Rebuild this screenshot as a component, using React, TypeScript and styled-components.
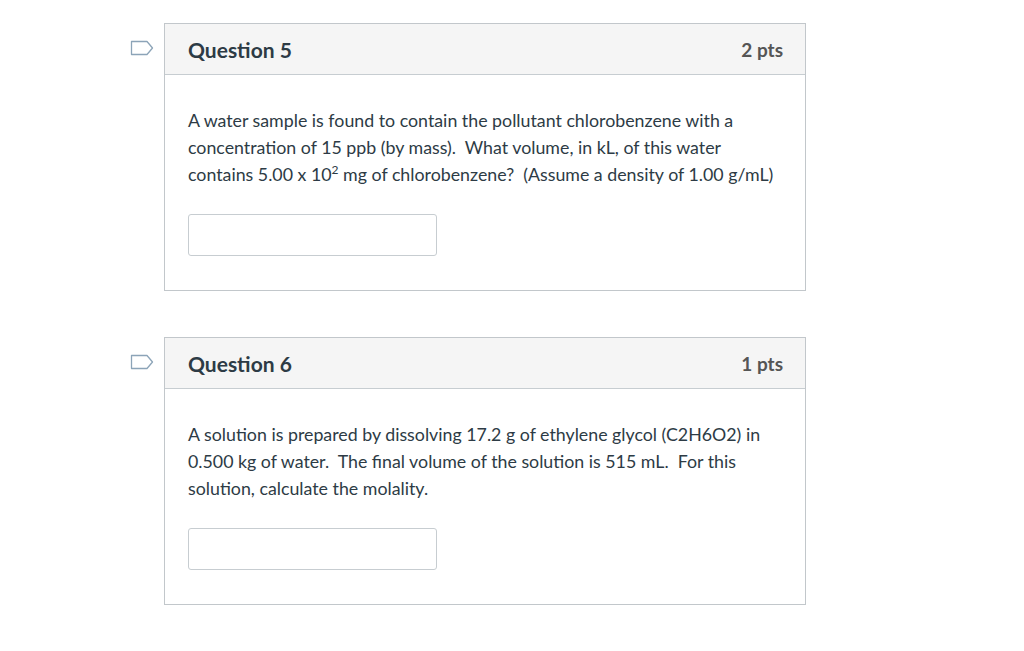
import React from "react";
import styled, { createGlobalStyle } from "styled-components";

const GlobalStyle = createGlobalStyle`
  html, body {
    margin: 0;
    padding: 0;
    background: #fff;
    font-family: Lato, "Open Sans", sans-serif;
    color: #2d3b45;
  }
`;

type Question = {
  title: string;
  points: string;
  body: React.ReactNode;
};

const questions: Question[] = [
  {
    title: "Question 5",
    points: "2 pts",
    body: (
      <>
        A water sample is found to contain the pollutant chlorobenzene with a concentration of 15
        ppb (by mass).&nbsp; What volume, in kL, of this water contains 5.00 x 10<sup>2</sup> mg of
        chlorobenzene?&nbsp; (Assume a density of 1.00 g/mL)
      </>
    ),
  },
  {
    title: "Question 6",
    points: "1 pts",
    body: (
      <>
        A solution is prepared by dissolving 17.2 g of ethylene glycol (C2H6O2) in 0.500 kg of
        water.&nbsp; The final volume of the solution is 515 mL.&nbsp; For this solution, calculate
        the molality.
      </>
    ),
  },
];

const FlagIcon = () => (
  <svg width="24" height="16" viewBox="0 0 24 16">
    <path d="M1.5 1.5 H17 L22.5 8 L17 14.5 H1.5 Z" fill="none" stroke="#8ca4b8" strokeWidth="1.3" strokeLinejoin="round" />
  </svg>
);

export default function App() {
  return (
    <>
      <GlobalStyle />
      <Page>
        {questions.map((q) => (
          <QuestionRow key={q.title}>
            <FlagSlot>
              <FlagIcon />
            </FlagSlot>
            <Card>
              <Header>
                <Title>{q.title}</Title>
                <Points>{q.points}</Points>
              </Header>
              <Body>
                <Text>{q.body}</Text>
                <AnswerInput type="text" />
              </Body>
            </Card>
          </QuestionRow>
        ))}
      </Page>
    </>
  );
}

const Page = styled.div`
  padding: 23px 0 0 130px;
  display: flex;
  flex-direction: column;
  gap: 46px;
`;

const QuestionRow = styled.div`
  display: flex;
  align-items: flex-start;
`;

const FlagSlot = styled.div`
  width: 34px;
  padding-top: 17px;
  display: flex;
`;

const Card = styled.div`
  width: 640px;
  border: 1px solid #c2c7cb;
  background: #fff;
`;

const Header = styled.div`
  height: 51px;
  box-sizing: border-box;
  background: #f5f5f5;
  border-bottom: 1px solid #c7cdd1;
  display: flex;
  align-items: center;
  justify-content: space-between;
  padding: 0 22px 0 23px;
`;

const Title = styled.div`
  font-size: 21px;
  font-weight: 700;
  color: #2d3b45;
`;

const Points = styled.div`
  font-size: 19px;
  font-weight: 700;
  color: #555;
`;

const Body = styled.div`
  padding: 32px 23px 34px;
`;

const Text = styled.div`
  font-size: 17.8px;
  line-height: 27px;
  color: #2d3b45;
  sup {
    font-size: 12px;
    line-height: 0;
    vertical-align: 7px;
  }
`;

const AnswerInput = styled.input`
  display: block;
  margin-top: 26px;
  width: 249px;
  height: 42px;
  box-sizing: border-box;
  border: 1px solid #c7cdd1;
  border-radius: 3px;
  background: #fff;
  font-family: Lato, sans-serif;
  font-size: 16px;
  padding: 0 10px;
  outline: none;
`;
